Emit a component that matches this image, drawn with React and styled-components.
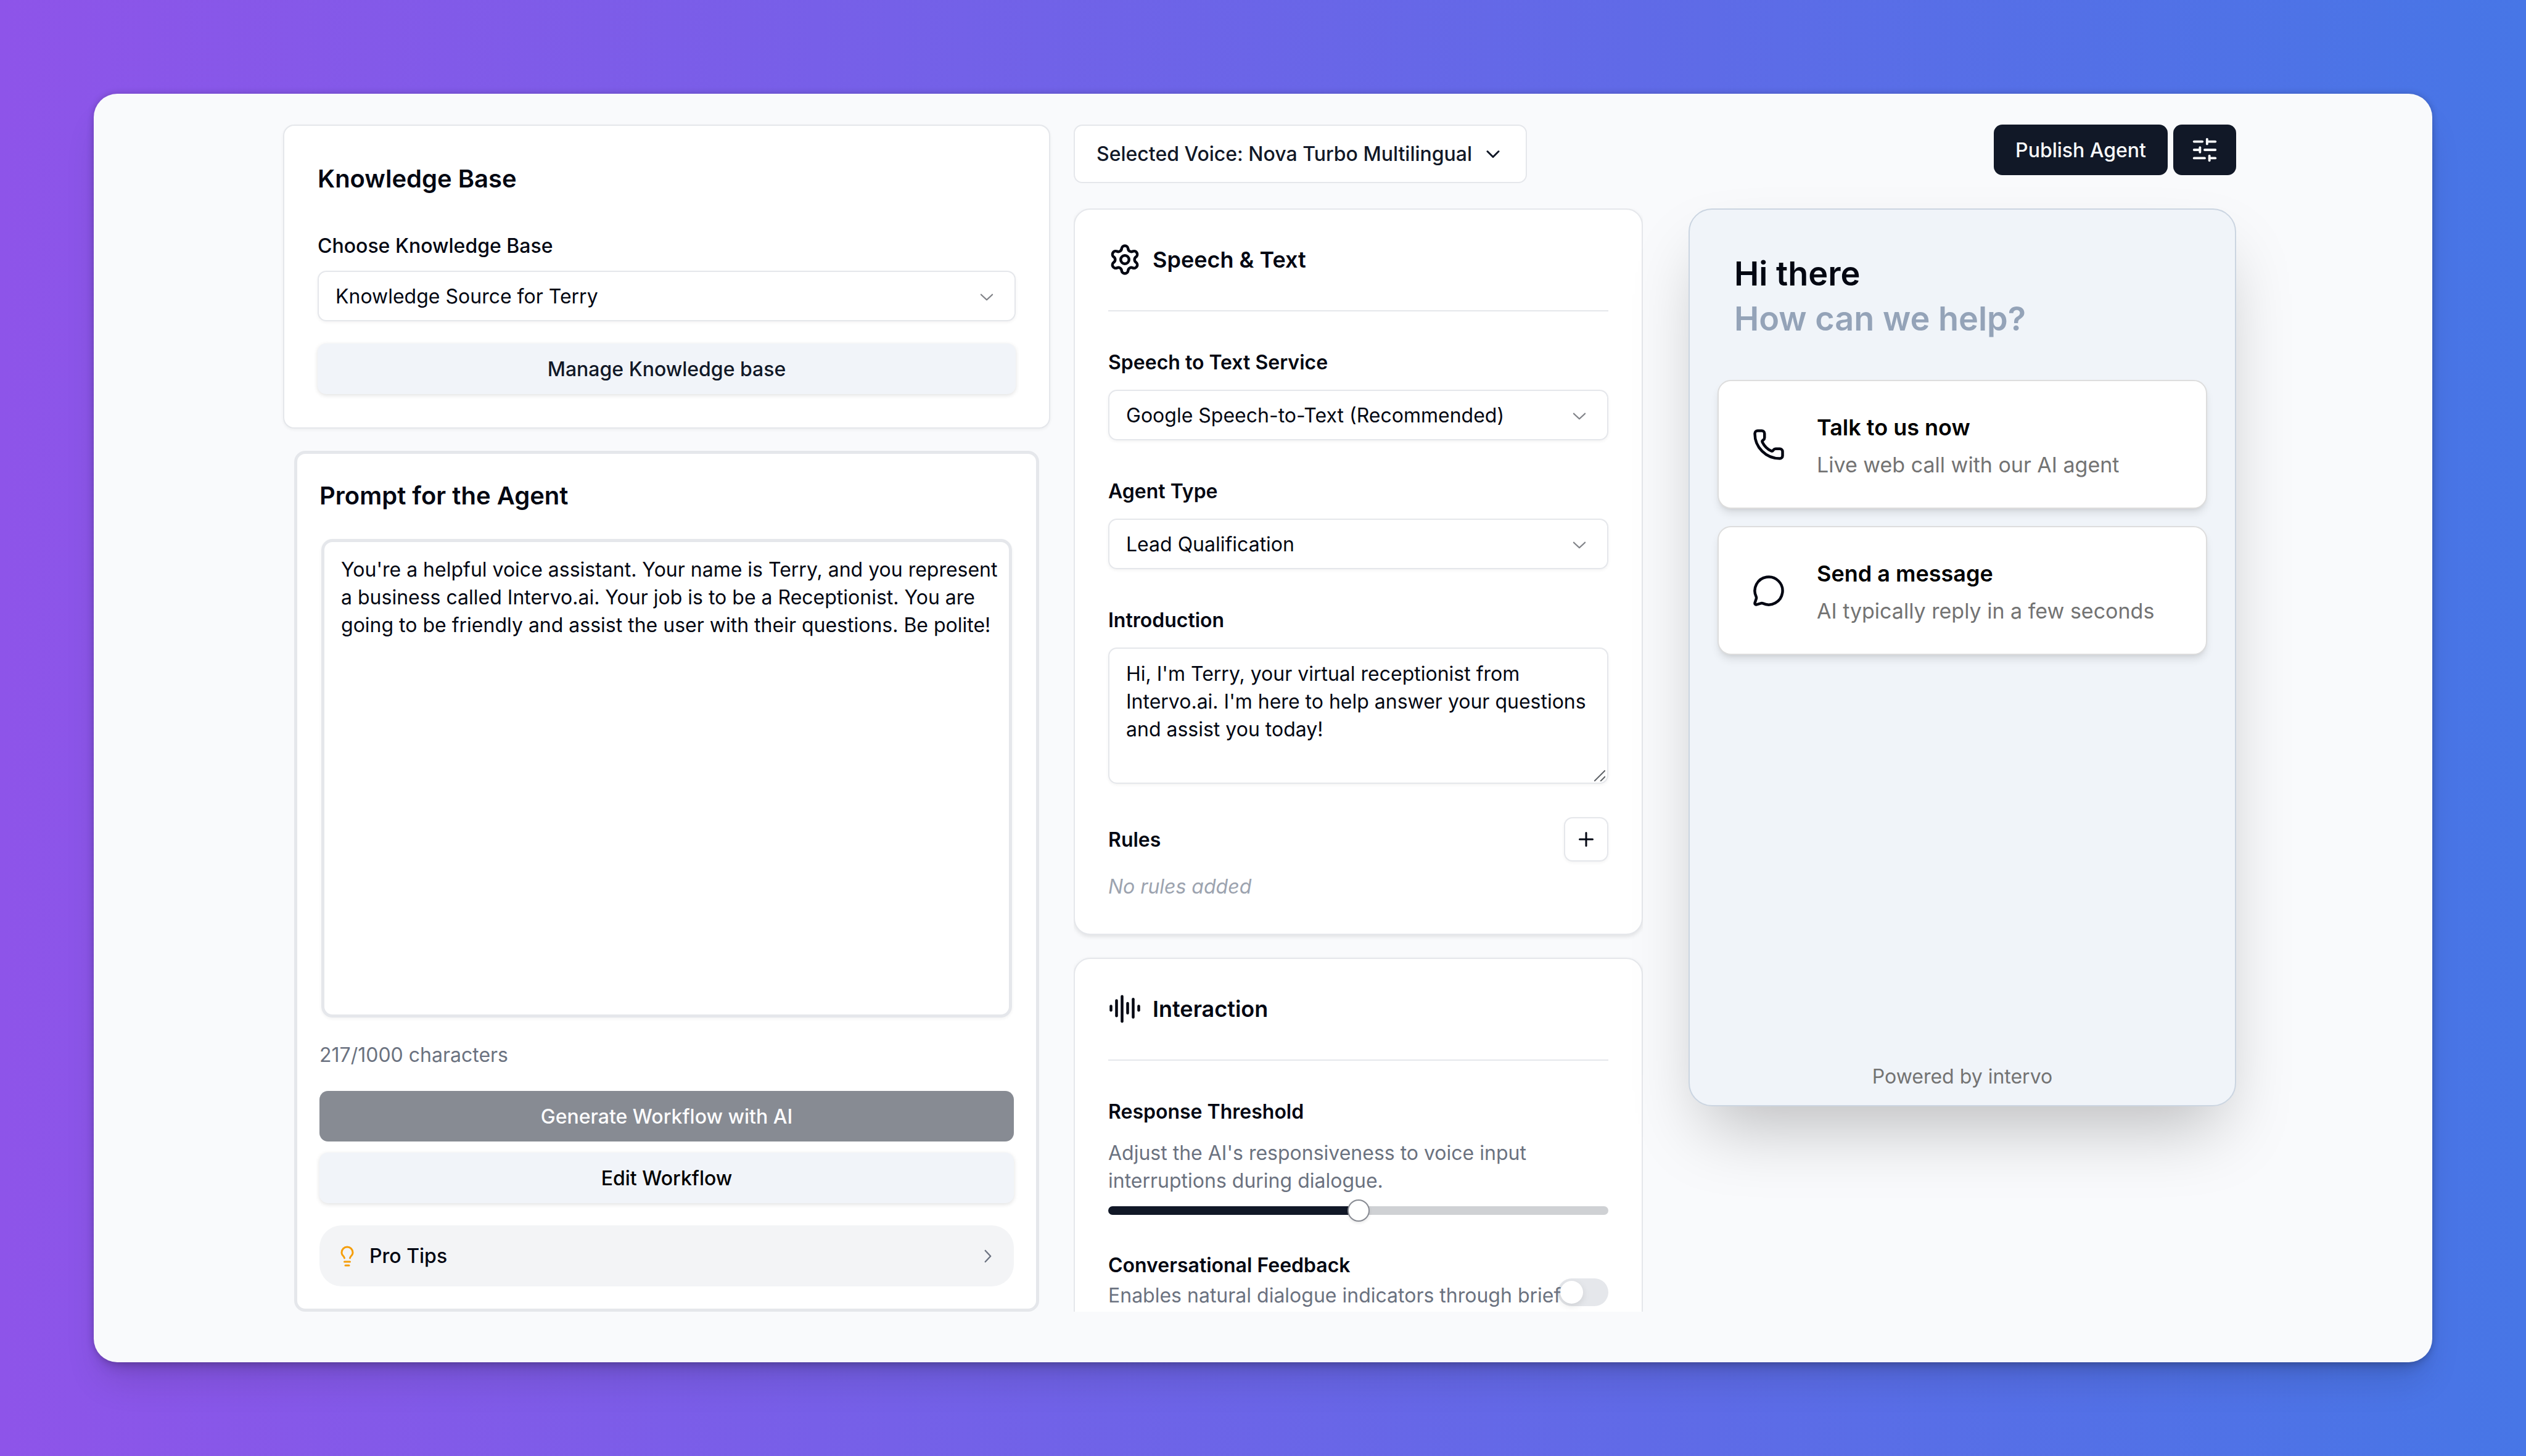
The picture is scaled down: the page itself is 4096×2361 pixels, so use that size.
import { useState } from 'react';
import styled, { createGlobalStyle, css } from 'styled-components';
import {
  AudioLines,
  ChevronDown,
  Lightbulb,
  MessageCircle,
  Phone,
  Plus,
  Settings,
  SlidersHorizontal,
} from 'lucide-react';
import { RxChevronDown, RxChevronRight } from 'react-icons/rx';

const PROMPT =
  "You're a helpful voice assistant. Your name is Terry, and you represent a business called Intervo.ai. Your job is to be a Receptionist. You are going to be friendly and assist the user with their questions. Be polite!";

const INTRO =
  "Hi, I'm Terry, your virtual receptionist from Intervo.ai. I'm here to help answer your questions and assist you today!";

const SelectField = ({ id, value }) => (
  <SelectWrapper>
    <Select id={id} defaultValue={value}>
      <option value={value}>{value}</option>
    </Select>
    <RxChevronDown size={34} />
  </SelectWrapper>
);

const KnowledgeBase = () => (
  <Card as="section">
    <Title>Knowledge Base</Title>
    <KnowledgeLabel htmlFor="knowledge">Choose Knowledge Base</KnowledgeLabel>
    <SelectField id="knowledge" value="Knowledge Source for Terry" />
    <ManageButton type="button">Manage Knowledge base</ManageButton>
  </Card>
);

const AgentPrompt = () => (
  <PromptCard>
    <Title as="label" htmlFor="prompt">Prompt for the Agent</Title>
    <PromptArea id="prompt" defaultValue={PROMPT} spellCheck="false" />
    <Counter>217/1000 characters</Counter>
    <PromptActions>
      <Button type="button" $variant="muted" disabled>Generate Workflow with AI</Button>
      <EditButton type="button">Edit Workflow</EditButton>
    </PromptActions>
    <Tips type="button">
      <Lightbulb size={36} color="#f59e0b" />
      <span>Pro Tips</span>
      <RxChevronRight size={34} color="#6b7280" />
    </Tips>
  </PromptCard>
);

const SpeechCard = () => (
  <RoundCard>
    <CardHeader>
      <Settings size={54} />
      <CardTitle>Speech &amp; Text</CardTitle>
    </CardHeader>
    <Field>
      <Label htmlFor="stt">Speech to Text Service</Label>
      <SelectField id="stt" value="Google Speech-to-Text (Recommended)" />
    </Field>
    <Field>
      <Label htmlFor="agent-type">Agent Type</Label>
      <SelectField id="agent-type" value="Lead Qualification" />
    </Field>
    <Field>
      <Label htmlFor="intro">Introduction</Label>
      <IntroWrapper>
        <IntroArea id="intro" defaultValue={INTRO} spellCheck="false" />
        <svg width="18" height="18" viewBox="0 0 18 18" stroke="#5f6368" strokeWidth="2" aria-hidden="true">
          <path d="M0 18 18 0M10 18l8-8" />
        </svg>
      </IntroWrapper>
    </Field>
    <RulesRow>
      <Label as="h3">Rules</Label>
      <AddButton type="button" aria-label="Add rule">
        <Plus size={36} />
      </AddButton>
    </RulesRow>
    <Empty>No rules added</Empty>
  </RoundCard>
);

const InteractionCard = () => {
  const [threshold, setThreshold] = useState(50);
  const [feedback, setFeedback] = useState(false);

  return (
    <RoundCard>
      <CardHeader>
        <AudioLines size={54} />
        <CardTitle>Interaction</CardTitle>
      </CardHeader>
      <Field>
        <Label htmlFor="threshold">Response Threshold</Label>
        <Hint>Adjust the AI's responsiveness to voice input interruptions during dialogue.</Hint>
      </Field>
      <Slider
        id="threshold"
        type="range"
        min="0"
        max="100"
        value={threshold}
        onChange={(e) => setThreshold(Number(e.target.value))}
        style={{ '--fill': `${threshold}%` }}
      />
      <SwitchRow>
        <SwitchText>
          <Label htmlFor="feedback">Conversational Feedback</Label>
          <SwitchHint>Enables natural dialogue indicators through brief</SwitchHint>
        </SwitchText>
        <Switch
          id="feedback"
          type="checkbox"
          role="switch"
          checked={feedback}
          onChange={(e) => setFeedback(e.target.checked)}
        />
      </SwitchRow>
    </RoundCard>
  );
};

const ContactOption = ({ icon, title, text }) => (
  <Contact type="button">
    {icon}
    <span>
      <ContactTitle>{title}</ContactTitle>
      <ContactText>{text}</ContactText>
    </span>
  </Contact>
);

const Widget = () => (
  <WidgetCard>
    <Greeting>
      Hi there
      <span>How can we help?</span>
    </Greeting>
    <Contacts>
      <ContactOption icon={<Phone size={54} />} title="Talk to us now" text="Live web call with our AI agent" />
      <ContactOption icon={<MessageCircle size={54} />} title="Send a message" text="AI typically reply in a few seconds" />
    </Contacts>
    <Powered>Powered by intervo</Powered>
  </WidgetCard>
);

const App = () => {
  return (
    <>
      <GlobalStyle />
      <Page>
        <Panel>
          <Column>
            <KnowledgeBase />
            <AgentPrompt />
          </Column>
          <Column>
            <VoiceButton type="button">
              Selected Voice: Nova Turbo Multilingual
              <ChevronDown size={36} />
            </VoiceButton>
            <ScrollArea>
              <SpeechCard />
              <InteractionCard />
            </ScrollArea>
          </Column>
          <PreviewColumn>
            <Actions>
              <Button type="button">Publish Agent</Button>
              <OptionsButton type="button" aria-label="Agent options">
                <SlidersHorizontal size={46} />
              </OptionsButton>
            </Actions>
            <Widget />
          </PreviewColumn>
        </Panel>
      </Page>
    </>
  );
};

export default App;


const GlobalStyle = createGlobalStyle`
  * {
    box-sizing: border-box;
    margin: 0;
  }

  body {
    font-family: Inter, "Liberation Sans", sans-serif;
    font-size: 32px;
    line-height: 45px;
    color: #030712;
    -webkit-font-smoothing: antialiased;
  }

  button, select, textarea, input {
    font: inherit;
    color: inherit;
  }

  svg {
    flex-shrink: 0;
  }
`;

const Page = styled.main`
  height: 100vh;
  padding: 152px;
  background: linear-gradient(to right, #8e54e9, #4776e6);
`;

const Panel = styled.div`
  display: grid;
  grid-template-columns: 1244fr 923fr 924fr;
  grid-template-rows: minmax(0, 1fr);
  column-gap: 38px;
  height: 100%;
  padding: 50px 318px 82px 307px;
  border-radius: 38px;
  background: #f9fafc;
  box-shadow: 0 40px 60px -12px rgba(0, 0, 0, 0.12), 0 16px 24px -12px rgba(0, 0, 0, 0.2), 0 0 12px rgba(0, 0, 0, 0.2);
`;

const Column = styled.div`
  display: flex;
  flex-direction: column;
  min-width: 0;
  min-height: 0;
`;

const PreviewColumn = styled(Column)`
  padding-left: 36px;
`;

const Card = styled.div`
  display: flex;
  flex-direction: column;
  padding: 54px;
  border: 2px solid #e5e7eb;
  border-radius: 18px;
  background: white;
  box-shadow: 0 2px 5px rgba(0, 0, 0, 0.05);
`;

const PromptCard = styled.section`
  display: flex;
  flex: 1;
  flex-direction: column;
  margin: 36px 18px 0;
  padding: 36px;
  border: 5px solid #e5e7eb;
  border-radius: 18px;
  background: white;
`;

const Title = styled.h2`
  font-size: 40px;
  font-weight: 600;
  line-height: 64px;
`;

const Label = styled.label`
  font-size: 32px;
  font-weight: 600;
  line-height: 45px;
`;

const KnowledgeLabel = styled(Label)`
  margin: 54px 0 18px;
  font-weight: 500;
`;

const SelectWrapper = styled.div`
  position: relative;

  svg {
    position: absolute;
    top: 24px;
    right: 30px;
    opacity: 0.5;
    pointer-events: none;
  }
`;

const Select = styled.select`
  display: block;
  width: 100%;
  height: 82px;
  padding: 0 80px 0 27px;
  border: 2px solid #e5e7eb;
  border-radius: 14px;
  appearance: none;
  background: transparent;
  box-shadow: 0 2px 5px rgba(0, 0, 0, 0.05);
`;

const variants = {
  dark: css`
    background: #111827;
    color: #f9fafb;
  `,
  muted: css`
    background: #878b93;
    color: #fcfcfd;
  `,
  soft: css`
    background: #f1f4f9;
    color: #111827;
    box-shadow: 0 2px 7px rgba(0, 0, 0, 0.12);
  `,
};

const Button = styled.button`
  display: flex;
  align-items: center;
  justify-content: center;
  height: 82px;
  padding: 0 35px;
  border: 0;
  border-radius: 14px;
  font-weight: 500;
  ${({ $variant }) => variants[$variant || 'dark']}
`;

const ManageButton = styled(Button).attrs({ $variant: 'soft' })`
  margin-top: 36px;
`;

const EditButton = styled(Button).attrs({ $variant: 'soft' })`
  color: black;
`;

const areaText = css`
  display: block;
  background: transparent;
  font-size: 32px;
  line-height: 45px;
  box-shadow: 0 2px 5px rgba(0, 0, 0, 0.05);
`;

const PromptArea = styled.textarea`
  ${areaText}
  flex: 1;
  margin: 38px 3px;
  padding: 22px 18px 22px 27px;
  border: 5px solid #e5e7eb;
  border-radius: 18px;
  resize: none;
`;

const IntroWrapper = styled.div`
  position: relative;

  svg {
    position: absolute;
    right: 5px;
    bottom: 4px;
    pointer-events: none;
  }
`;

const IntroArea = styled.textarea`
  ${areaText}
  width: 100%;
  height: 221px;
  padding: 18px 27px;
  border: 2px solid #e5e7eb;
  border-radius: 14px;
  resize: vertical;

  &::-webkit-resizer {
    display: none;
  }
`;

const Counter = styled.p`
  color: #6b7280;
`;

const PromptActions = styled.div`
  display: flex;
  flex-direction: column;
  gap: 18px;
  margin: 36px 0;
`;

const Tips = styled.button`
  display: flex;
  align-items: center;
  gap: 18px;
  padding: 27px;
  border: 0;
  border-radius: 36px;
  background: #f3f4f6;
  font-weight: 500;
  text-align: left;

  span {
    flex: 1;
  }
`;

const VoiceButton = styled.button`
  display: flex;
  align-items: center;
  align-self: flex-start;
  gap: 16px;
  height: 95px;
  padding: 0 35px;
  border: 2px solid #e5e7eb;
  border-radius: 14px;
  background: white;
  color: #111827;
  font-weight: 500;
`;

const ScrollArea = styled.div`
  display: flex;
  flex: 1;
  flex-direction: column;
  gap: 37px;
  min-height: 0;
  margin-top: 41px;
  overflow-y: auto;
  scrollbar-width: none;
`;

const RoundCard = styled.section`
  flex-shrink: 0;
  padding: 54px;
  border: 2px solid #e5e7eb;
  border-radius: 27px;
  background: white;
  box-shadow: 0 3px 7px rgba(0, 0, 0, 0.1);
`;

const CardHeader = styled.header`
  display: flex;
  align-items: center;
  gap: 18px;
  padding-bottom: 55px;
  border-bottom: 2px solid #e5e7eb;
`;

const CardTitle = styled.h2`
  font-size: 36px;
  font-weight: 600;
  line-height: 54px;
`;

const Field = styled.div`
  display: flex;
  flex-direction: column;
  gap: 22px;
  margin-top: 60px;
`;

const RulesRow = styled.div`
  display: flex;
  align-items: center;
  justify-content: space-between;
  margin: 54px 0 18px;
`;

const AddButton = styled.button`
  display: flex;
  align-items: center;
  justify-content: center;
  width: 72px;
  height: 72px;
  padding: 0;
  border: 2px solid #e5e7eb;
  border-radius: 14px;
  background: white;
  box-shadow: 0 2px 5px rgba(0, 0, 0, 0.05);
`;

const Empty = styled.p`
  color: #9ca3af;
  font-style: italic;
`;

const Hint = styled.p`
  color: #6b7280;
`;

const Slider = styled.input`
  display: block;
  width: 100%;
  height: 36px;
  margin-top: 8px;
  appearance: none;
  background: transparent;

  &::-webkit-slider-runnable-track {
    height: 14px;
    border-radius: 7px;
    background: linear-gradient(to right, #111827 var(--fill), #cfd1d4 var(--fill));
  }

  &::-webkit-slider-thumb {
    appearance: none;
    width: 36px;
    height: 36px;
    margin-top: -11px;
    border: 2px solid #888b93;
    border-radius: 50%;
    background: white;
    box-shadow: 0 2px 5px rgba(0, 0, 0, 0.1);
  }
`;

const SwitchRow = styled.div`
  display: flex;
  align-items: flex-end;
  margin-top: 48px;
`;

const SwitchText = styled.div`
  display: flex;
  flex: 1;
  flex-direction: column;
  gap: 4px;
  min-width: 0;
  z-index: 1;
`;

const SwitchHint = styled(Hint)`
  white-space: nowrap;
`;

const Switch = styled.input`
  flex-shrink: 0;
  width: 82px;
  height: 45px;
  margin-bottom: 5px;
  padding: 4px;
  border-radius: 23px;
  appearance: none;
  background: #e5e7eb;

  &::before {
    content: '';
    display: block;
    width: 37px;
    height: 37px;
    border-radius: 50%;
    background: white;
    box-shadow: 0 4px 12px rgba(0, 0, 0, 0.1);
  }

  &:checked {
    background: #111827;
  }

  &:checked::before {
    margin-left: auto;
  }
`;

const Actions = styled.div`
  display: flex;
  justify-content: flex-end;
  gap: 9px;
  margin-bottom: 54px;
`;

const OptionsButton = styled(Button)`
  width: 102px;
  padding: 0;
`;

const WidgetCard = styled.section`
  display: flex;
  flex-direction: column;
  min-height: 1456px;
  padding: 67px 45px 24px;
  border: 2px solid #cbd5e1;
  border-radius: 38px;
  background: #f0f4f9;
  box-shadow: 0 57px 113px -27px rgba(0, 0, 0, 0.25);
`;

const Greeting = styled.h1`
  padding: 0 27px;
  font-size: 54px;
  font-weight: 600;
  line-height: 73px;

  span {
    display: block;
    color: #94a3b8;
  }
`;

const Contacts = styled.div`
  display: flex;
  flex: 1;
  flex-direction: column;
  gap: 28px;
  margin-top: 63px;
`;

const Contact = styled.button`
  display: flex;
  align-items: center;
  gap: 51px;
  min-height: 209px;
  padding: 45px 54px;
  border: 2px solid #dddddd;
  border-radius: 22px;
  background: white;
  box-shadow: 0 9px 14px -2px rgba(0, 0, 0, 0.1), 0 4px 7px -4px rgba(0, 0, 0, 0.1);
  text-align: left;
`;

const ContactTitle = styled.strong`
  display: block;
  margin-bottom: 8px;
  color: black;
  font-size: 36px;
  font-weight: 600;
  line-height: 58px;
`;

const ContactText = styled.span`
  display: block;
  color: #737373;
  font-size: 34px;
  line-height: 47px;
`;

const Powered = styled.p`
  color: #737373;
  text-align: center;
`;
